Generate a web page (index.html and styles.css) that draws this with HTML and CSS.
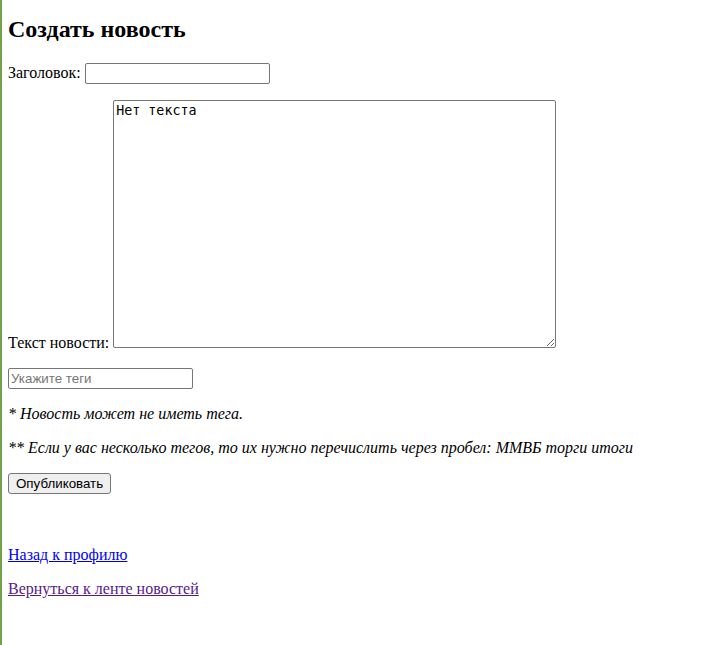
FILE: index.html
```html
<!DOCTYPE html>
<html lang="ru">
<head>
<meta charset="utf-8">
<title>Создать новость</title>
<link rel="stylesheet" href="styles.css">
</head>
<body>
<h2 class="title">Создать новость</h2>
<form class="news-form">
  <p>Заголовок: <input class="field" type="text"></p>
  <p>Текст новости: <textarea class="body-text">Нет текста</textarea></p>
  <p><input class="field" type="text" placeholder="Укажите теги"></p>
  <p><i>* Новость может не иметь тега.</i></p>
  <p><i>** Если у вас несколько тегов, то их нужно перечислить через пробел: ММВБ торги итоги</i></p>
  <p class="actions"><button class="btn" type="button">Опубликовать</button></p>
</form>
<br>
<p><a class="link" href="#profile">Назад к профилю</a></p>
<p><a class="link visited" href="#feed">Вернуться к ленте новостей</a></p>
</body>
</html>
```

FILE: styles.css
```css
html {
  background: linear-gradient(to right, #72a348 2px, #ffffff 2px);
  min-height: 100%;
}
body {
  margin: 8px;
  font-family: "Liberation Serif", "Times New Roman", serif;
  font-size: 16px;
  color: #000;
}
.title {
  font-size: 24px;
  margin: 8px 0 19.92px;
}
.news-form p {
  margin: 16px 0;
}
.news-form .actions {
  margin-bottom: 18px;
}
.field {
  box-sizing: border-box;
  width: 185px;
  height: 21px;
  font-family: "Liberation Sans", Arial, sans-serif;
  font-size: 13.33px;
  padding: 1px 2px;
  border: 1px solid #767676;
  border-radius: 2px;
  vertical-align: baseline;
}
.field::placeholder {
  color: #757575;
}
.body-text {
  box-sizing: border-box;
  width: 443px;
  height: 248px;
  font-family: "DejaVu Sans Mono", monospace;
  font-size: 13.33px;
  padding: 2px;
  border: 1px solid #767676;
  border-radius: 2px;
  vertical-align: baseline;
}
.btn {
  font-family: "Liberation Sans", Arial, sans-serif;
  font-size: 13.33px;
  padding: 2px 7px;
  border: 1px solid #767676;
  border-radius: 3px;
  background: #efefef;
  color: #000;
}
.link {
  color: #0000ee;
}
.link.visited {
  color: #551a8b;
}
```
